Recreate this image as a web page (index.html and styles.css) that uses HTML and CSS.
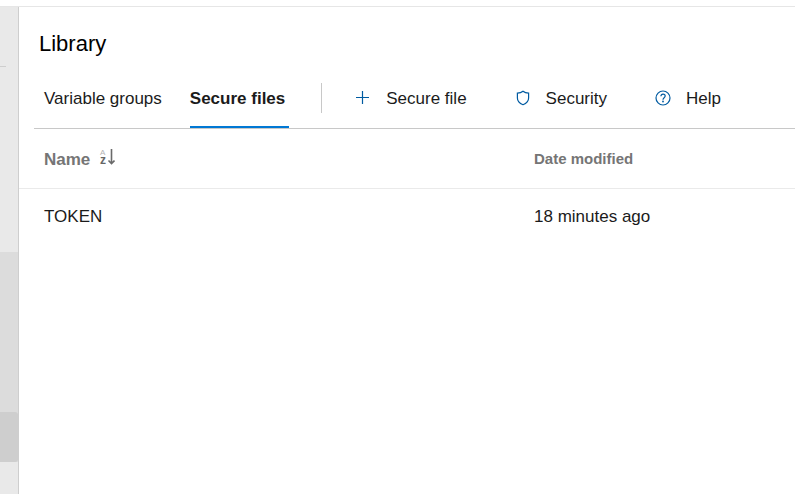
FILE: index.html
```
<!DOCTYPE html>
<html lang="en">
<head>
<meta charset="utf-8">
<title>Library</title>
<link rel="stylesheet" href="styles.css">
</head>
<body>
<div class="app">
  <div class="rail">
    <div class="rail-top"></div>
    <div class="rail-group">
      <div class="rail-current"></div>
    </div>
  </div>
  <main class="page">
    <h1 class="title">Library</h1>
    <div class="toolbar">
      <nav class="tabs">
        <a class="tab" href="#groups">Variable groups</a>
        <a class="tab tab-active" href="#files" aria-current="page">Secure files</a>
      </nav>
      <div class="divider"></div>
      <div class="actions">
        <button class="action" type="button">
          <svg class="icon" viewBox="0 0 16 16" aria-hidden="true"><path d="M7.500 1v13M1 7.500h13"/></svg>
          Secure file
        </button>
        <button class="action" type="button">
          <svg class="icon" viewBox="0 0 16 16" aria-hidden="true"><path d="M8 1.300C6.500 2.600 4.500 3.200 2.400 3.200V8c0 3.200 2.200 5.400 5.600 6.700 3.400-1.300 5.600-3.500 5.600-6.700V3.200C11.500 3.200 9.500 2.600 8 1.300z"/></svg>
          Security
        </button>
        <button class="action" type="button">
          <svg class="icon" viewBox="0 0 16 16" aria-hidden="true"><circle cx="8" cy="8" r="7"/><path d="M5.900 6.300c0-1.400.9-2.200 2.100-2.200s2.200.8 2.200 2c0 1.700-2.200 1.700-2.200 3.600"/><circle class="dot" cx="8" cy="11.500" r=".9"/></svg>
          Help
        </button>
      </div>
    </div>
    <table class="files">
      <thead>
        <tr>
          <th class="name" scope="col"><span class="sort">Name
            <svg class="sort-icon" viewBox="0 0 16 20" aria-hidden="true"><text class="sort-a" x="1" y="7">A</text><text class="sort-z" x="1" y="16">z</text><path d="M12.500 1v14M9.500 12.500l3 3 3-3"/></svg></span></th>
          <th class="date" scope="col">Date modified</th>
        </tr>
      </thead>
      <tbody>
        <tr>
          <td class="name">TOKEN</td>
          <td class="date">18 minutes ago</td>
        </tr>
      </tbody>
    </table>
  </main>
</div>
</body>
</html>
```
FILE: styles.css
```
* {
  box-sizing: border-box;
}

body {
  margin: 0;
  background: #fff;
  color: #1b1b1b;
  font: 17px/20px "Liberation Sans", Arial, sans-serif;
}

.app {
  display: flex;
  min-height: calc(100vh - 6px);
  margin-top: 6px;
  border-top: 1px solid #e6e6e6;
}

.rail {
  flex: none;
  width: 19px;
  background: #e9e9e9;
  border-right: 1px solid #cecece;
}

.rail-top {
  width: 6px;
  height: 60px;
  border-bottom: 1px solid #cecece;
}

.rail-group {
  margin-top: 185px;
  padding-top: 160px;
  background: #dcdcdc;
}

.rail-current {
  height: 50px;
  background: #cecece;
  border-radius: 0 3px 3px 0;
}

.page {
  flex: 1;
  min-width: 0;
}

.title {
  margin: 0;
  padding: 22px 20px 0;
  color: #000;
  font-size: 22px;
  font-weight: 400;
  line-height: 30px;
}

.toolbar {
  display: flex;
  align-items: center;
  height: 62px;
  margin: 8px 0 0 15px;
  border-bottom: 1px solid #c8c8c8;
}

.tabs {
  display: flex;
  align-self: stretch;
  gap: 28px;
  padding-left: 10px;
  white-space: nowrap;
}

.tab {
  padding-top: 22px;
  border-bottom: 2px solid transparent;
  color: inherit;
  text-decoration: none;
}

.tab-active {
  padding-right: 4px;
  border-bottom-color: #0078d4;
  font-weight: 700;
}

.divider {
  width: 1px;
  height: 30px;
  margin: 0 33px 0 32px;
  background: #c8c8c8;
}

.actions {
  display: flex;
  gap: 48px;
}

.action {
  display: flex;
  align-items: center;
  gap: 15px;
  padding: 2px 0 0;
  border: 0;
  background: none;
  color: inherit;
  font: inherit;
  white-space: nowrap;
}

.icon {
  width: 16px;
  height: 16px;
  margin-bottom: 2px;
  fill: none;
  stroke: #005ba1;
  stroke-width: 1.2;
}

.dot {
  fill: #005ba1;
  stroke: none;
}

.files {
  width: 100%;
  border-collapse: collapse;
  table-layout: fixed;
  text-align: left;
}

.files th {
  height: 59px;
  padding: 2px 0 0;
  border-bottom: 1px solid #eaeaea;
  color: #757575;
  font-weight: 700;
}

.files td {
  height: 56px;
  padding: 2px 0 0;
}

.files .name {
  width: 515px;
  padding-left: 25px;
}

.files th.date {
  font-size: 15px;
}

.sort {
  display: flex;
  align-items: center;
  gap: 9px;
  padding-top: 2px;
}

.sort-icon {
  width: 16px;
  height: 20px;
  margin-bottom: 4px;
  fill: none;
  stroke: #6a6a6a;
  stroke-width: 1.6;
}

.sort-a,
.sort-z {
  stroke: none;
  font-size: 8px;
  font-weight: 400;
  fill: #b4b4b4;
}

.sort-z {
  font-size: 12px;
  font-weight: 700;
  fill: #666;
}
```
